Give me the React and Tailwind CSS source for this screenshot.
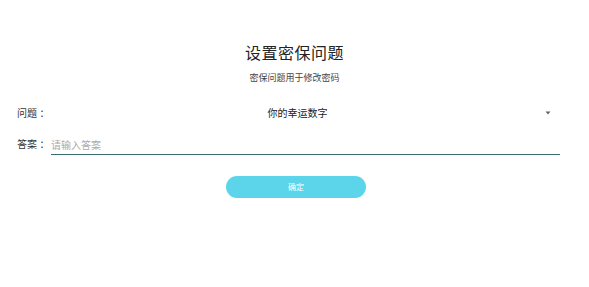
import { useState } from "react";

const FONT = { fontFamily: '"Noto Sans", "Noto Sans CJK SC", sans-serif' };

export default function App() {
  const [answer, setAnswer] = useState("");

  return (
    <div className="w-[589px] h-[287px] bg-white text-[#333]" style={FONT}>
      <div className="pt-[41px] flex flex-col items-center">
        <h1 className="text-[16px] leading-[24px] text-[#222] tracking-[0.5px]">设置密保问题</h1>
        <p className="mt-[7px] text-[9px] leading-[12px] text-[#444]">密保问题用于修改密码</p>
      </div>

      <div className="mt-[17px] pl-[17px] pr-[29px]">
        <div className="flex items-center h-[24px]">
          <span className="text-[10px] w-[34px] shrink-0 text-[#333]">问题 ：</span>
          <div className="flex-1 flex items-center">
            <span className="flex-1 text-center text-[10px] text-[#222]">你的幸运数字</span>
            <svg width="8" height="6" viewBox="0 0 8 6" className="mr-[8px]">
              <path d="M1.5 1.5 L6.5 1.5 L4 4.5 Z" fill="#666" />
            </svg>
          </div>
        </div>

        <div className="flex items-end h-[24px] mt-[6px]">
          <span className="text-[10px] w-[34px] shrink-0 pb-[3px] text-[#333]">答案 ：</span>
          <input
            value={answer}
            onChange={(e) => setAnswer(e.target.value)}
            placeholder="请输入答案"
            className="flex-1 text-[10px] h-[20px] bg-transparent border-b border-[#3a6f72] outline-none placeholder:text-[#aaa]"
          />
        </div>
      </div>

      <div className="flex justify-center mt-[21px] pl-[3px]">
        <button className="w-[140px] h-[22px] rounded-full bg-[#5cd5ea] text-white text-[8px]">确定</button>
      </div>
    </div>
  );
}
